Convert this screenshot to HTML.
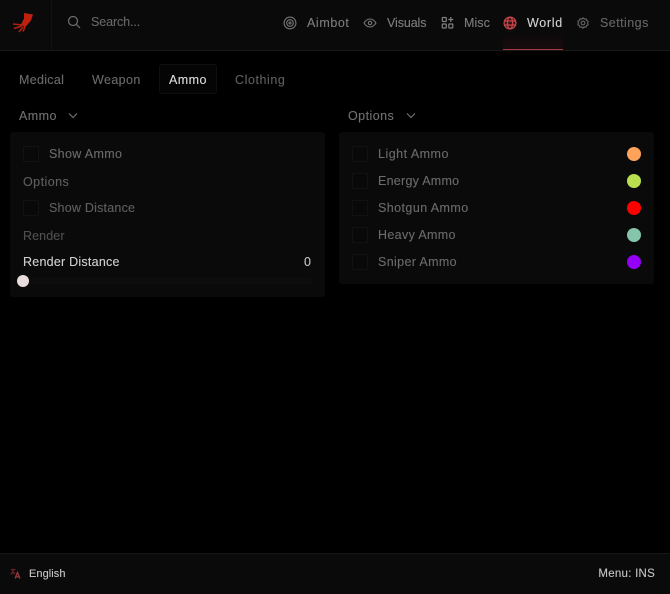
<!DOCTYPE html>
<html><head><meta charset="utf-8"><style>
*{box-sizing:border-box;margin:0;padding:0}
html,body{width:670px;height:594px;overflow:hidden;background:#000;font-family:"Liberation Sans",sans-serif;font-size:12.5px;color:#6a6a6a}
.a{position:absolute;white-space:nowrap;line-height:14px;-webkit-text-stroke:.12px currentColor}
svg{position:absolute;fill:none}
.box{position:absolute;background:#0a0a0a;border-radius:3px}
.cb{position:absolute;width:16px;height:16px;border:1px solid #121212;background:#090909;border-radius:1px}
.dot{position:absolute;width:14px;height:14px;border-radius:50%;left:627px}
.n{color:#7d7d7d}
</style></head><body>
<div class="box" style="left:0;top:0;width:670px;height:51px;background:#0a0a0a;border-bottom:1px solid #181818;border-radius:0"></div>
<div style="position:absolute;left:51px;top:0;width:1px;height:50px;background:#121212"></div>
<svg style="left:10px;top:8px" width="26" height="28" viewBox="0 0 26 28"><path d="M14 5l9 1.500-2 6-6 7-4-3 3-6z" fill="#bf210f"/><path d="M12 17L3 16M12 18L4 20.500M13 19L9 24M15 19L13 23.500" stroke="#b0200f" stroke-width="1.600"/></svg>
<svg style="left:67px;top:15px" width="14" height="14" viewBox="0 0 14 14" stroke="#6f6f6f" stroke-width="1.200"><circle cx="6" cy="6" r="4.500"/><path d="M9.500 9.500L13 13"/></svg>
<div class="a" style="left:91px;top:15px;color:#666;letter-spacing:-.1px">Search...</div>
<svg style="left:283px;top:16px" width="14" height="14" viewBox="0 0 14 14" stroke="#777" stroke-width="1.100"><circle cx="7" cy="7" r="5.900"/><circle cx="7" cy="7" r="3.300"/><circle cx="7" cy="7" r="1"/></svg>
<div class="a n" style="left:307px;top:16px;letter-spacing:.6px">Aimbot</div>
<svg style="left:363px;top:16px" width="14" height="14" viewBox="0 0 14 14" stroke="#777" stroke-width="1.100"><path d="M1 7C3 3.800 5 3 7 3s4 .8 6 4c-2 3.200-4 4-6 4s-4-.8-6-4z"/><circle cx="7" cy="7" r="1.700"/></svg>
<div class="a n" style="left:387px;top:16px;letter-spacing:-.1px">Visuals</div>
<svg style="left:441px;top:16px" width="14" height="14" viewBox="0 0 14 14" stroke="#808080" stroke-width="1.200"><rect x="1.300" y="1.500" width="4" height="4" rx=".6"/><rect x="1.300" y="8" width="4" height="4" rx=".6"/><rect x="7.800" y="8" width="4" height="4" rx=".6"/><path d="M9.800 1v5M7.300 3.500h5"/></svg>
<div class="a n" style="left:464px;top:16px;letter-spacing:.05px">Misc</div>
<div style="position:absolute;left:503px;top:32px;width:60px;height:18px;background:linear-gradient(#0a0a0a,#1a0b0d)"></div>
<div style="position:absolute;left:503px;top:49px;width:60px;height:1px;background:#a33a40"></div>
<svg style="left:503px;top:16px" width="14" height="14" viewBox="0 0 14 14" stroke="#c8474d" stroke-width="1.200"><circle cx="7" cy="7" r="5.900" fill="#3a1216"/><ellipse cx="7" cy="7" rx="2.600" ry="5.900"/><path d="M1.500 5h11M1.500 9h11"/></svg>
<div class="a" style="left:527px;top:16px;color:#d2d2d2;letter-spacing:.7px">World</div>
<svg style="left:577px;top:17px" width="12" height="12" viewBox="0 0 14 14" stroke="#6e6e6e" stroke-width="1.200"><path d="M7 1l1.500 1.400 2-.3.700 1.900 1.800 1-.6 2 .6 2-1.800 1-.7 1.900-2-.3L7 13l-1.500-1.400-2 .3-.7-1.900-1.800-1 .6-2-.6-2 1.800-1 .7-1.900 2 .3z"/><circle cx="7" cy="7" r="2.200"/></svg>
<div class="a" style="left:600px;top:16px;color:#666;letter-spacing:.45px">Settings</div>

<div class="a" style="left:19px;top:73px;letter-spacing:.3px">Medical</div>
<div class="a" style="left:92px;top:73px;letter-spacing:.4px">Weapon</div>
<div style="position:absolute;left:159px;top:64px;width:58px;height:30px;background:#050505;border:1px solid #0f0f0f;border-radius:3px"></div>
<div class="a" style="left:169px;top:73px;color:#dedede;letter-spacing:.43px">Ammo</div>
<div class="a" style="left:235px;top:73px;color:#5e5e5e;letter-spacing:.57px">Clothing</div>

<div class="a" style="left:19px;top:109px;color:#707070;letter-spacing:.43px">Ammo</div>
<svg style="left:68px;top:112px" width="10" height="8" viewBox="0 0 10 8" stroke="#777" stroke-width="1.100"><path d="M1 1.500l4 4 4-4"/></svg>
<div class="a" style="left:348px;top:109px;color:#707070;letter-spacing:.45px">Options</div>
<svg style="left:406px;top:112px" width="10" height="8" viewBox="0 0 10 8" stroke="#777" stroke-width="1.100"><path d="M1 1.500l4 4 4-4"/></svg>

<div class="box" style="left:10px;top:132px;width:315px;height:165px"></div>
<div class="cb" style="left:23px;top:146px"></div>
<div class="a" style="left:49px;top:147px;letter-spacing:.35px">Show Ammo</div>
<div class="a" style="left:23px;top:175px;color:#5f5f5f;letter-spacing:.45px">Options</div>
<div class="cb" style="left:23px;top:200px"></div>
<div class="a" style="left:49px;top:201px;color:#5f5f5f;letter-spacing:.22px">Show Distance</div>
<div class="a" style="left:23px;top:229px;color:#505050;letter-spacing:.1px">Render</div>
<div class="a" style="left:23px;top:255px;color:#d0d0d0;letter-spacing:.24px">Render Distance</div>
<div class="a" style="left:304px;top:255px;color:#c4c4c4">0</div>
<div style="position:absolute;left:23px;top:278px;width:289px;height:6px;background:#0d0d0d;border-radius:3px"></div>
<div style="position:absolute;left:17px;top:275px;width:12px;height:12px;border-radius:50%;background:#e8dcdc"></div>

<div class="box" style="left:339px;top:132px;width:315px;height:152px"></div>
<div class="cb" style="left:352px;top:146px"></div>
<div class="a" style="left:378px;top:147px;letter-spacing:.49px">Light Ammo</div>
<div class="dot" style="top:147px;background:#fea25c"></div>
<div class="cb" style="left:352px;top:173px"></div>
<div class="a" style="left:378px;top:174px;letter-spacing:.26px">Energy Ammo</div>
<div class="dot" style="top:174px;background:#b9de4f"></div>
<div class="cb" style="left:352px;top:200px"></div>
<div class="a" style="left:378px;top:201px;letter-spacing:.43px">Shotgun Ammo</div>
<div class="dot" style="top:201px;background:#fe0000"></div>
<div class="cb" style="left:352px;top:227px"></div>
<div class="a" style="left:378px;top:228px;letter-spacing:.35px">Heavy Ammo</div>
<div class="dot" style="top:228px;background:#84c5ab"></div>
<div class="cb" style="left:352px;top:254px"></div>
<div class="a" style="left:378px;top:255px;letter-spacing:.36px">Sniper Ammo</div>
<div class="dot" style="top:255px;background:#9400f5"></div>

<div class="box" style="left:0;top:553px;width:670px;height:41px;border-top:1px solid #171717;border-radius:0"></div>
<svg style="left:10px;top:568px" width="11" height="11" viewBox="0 0 11 11" stroke="#6e2226" stroke-width="1.300"><path d="M1 1.500h4.500M3 1.500C3 4 2 5.500 1 6.500M2.500 3.500L5 6"/><path d="M5 10.500L7.500 4.500 10 10.500M6 8.800h3" stroke="#94383c"/></svg>
<div class="a" style="left:29px;top:567px;color:#c8c8c8;font-size:11px;letter-spacing:.07px">English</div>
<div class="a" style="right:15px;top:567px;color:#c4c4c4;font-size:11.5px;letter-spacing:.25px">Menu: INS</div>
</body></html>
